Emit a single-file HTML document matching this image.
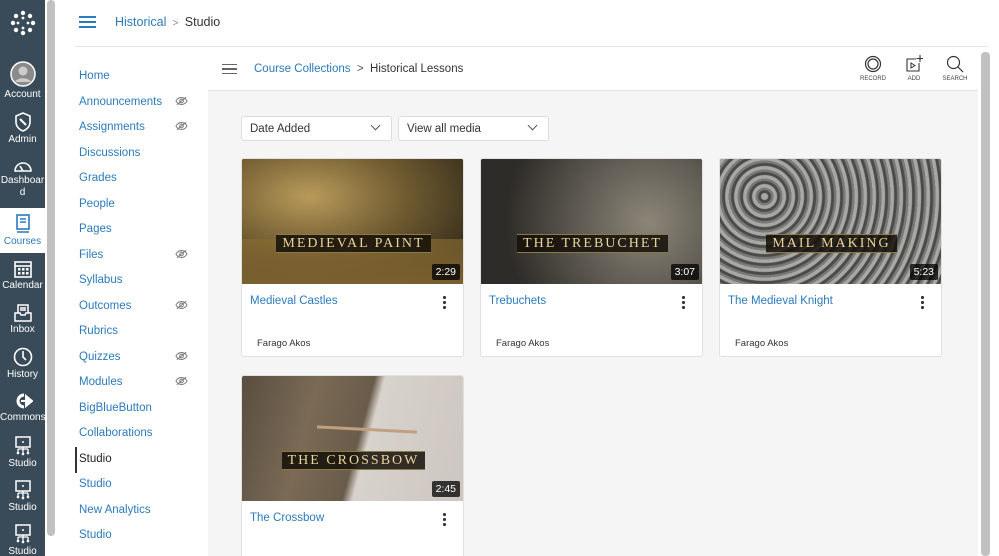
<!DOCTYPE html>
<html style="overflow:hidden;height:556px"><head><meta charset="utf-8"><style>
*{box-sizing:border-box;margin:0;padding:0}
body{width:999px;height:556px;overflow:hidden;background:#fff;font-family:"Liberation Sans",sans-serif;position:relative}
.gn{position:absolute;left:0;top:0;width:45px;height:556px;background:#394b58;color:#fff}
.gi{position:absolute;left:0;width:45px;text-align:center;font-size:10px;line-height:12px}
.gi svg{display:block;margin:0 auto 2px}
.sb{position:absolute;left:45px;top:0;width:13px;height:556px;background:#fff}
.sb div{position:absolute;left:2px;top:0;width:8px;height:536px;background:#c1c1c1;border-radius:4px}
.top{position:absolute;left:75px;top:0;width:913px;height:47px;border-bottom:1px solid #e6e6e6}
.cn{position:absolute;left:58px;top:47px;width:150px;height:509px;background:#fff}
.cn a{position:absolute;left:21px;font-size:11.5px;color:#2b7abc;text-decoration:none}
.eye{position:absolute;left:117px}
.main{position:absolute;left:208px;top:47px;width:770px;height:509px;background:#f5f5f5;overflow:hidden}
.hdr{position:absolute;left:0;top:0;width:770px;height:44px;background:#fff;border-bottom:1px solid #e2e2e2}
.rsb{position:absolute;left:978px;top:47px;width:21px;height:509px;background:#fff}
.rsb div{position:absolute;left:3px;top:5px;width:9px;height:504px;background:#c1c1c1;border-radius:4px}
.sel{position:absolute;top:69px;height:25px;background:#fff;border:1px solid #ddd;border-radius:3px;font-size:11.5px;color:#333;padding:6px 8px}
.sel span{position:absolute;right:12px;top:5px;width:7px;height:7px;border-right:1px solid #555;border-bottom:1px solid #555;transform:rotate(45deg)}
.card{position:absolute;width:223px;height:199px;background:#fff;border:1px solid #e0e0e0;border-radius:3px;overflow:hidden}
.th{position:absolute;left:0;top:0;width:223px;height:125px}
.lab{position:absolute;left:0;right:0;top:75px;text-align:center}
.lab span{background:rgba(20,15,8,.85);color:#e8d59a;font-family:"Liberation Serif",serif;font-size:14px;letter-spacing:2px;padding:1px 6px;border-top:1px solid #8a7a4a;border-bottom:1px solid #8a7a4a}
.dur{position:absolute;right:5px;bottom:4px;background:rgba(0,0,0,.75);color:#fff;font-size:10.5px;padding:2px 4px;border-radius:2px}
.tt{position:absolute;left:8px;top:136px;font-size:11.5px;color:#2b7abc}
.dots{position:absolute;left:201px;top:137px;width:3px;font-size:0}
.dots i{display:block;width:2.5px;height:2.5px;background:#333;border-radius:50%;margin-bottom:2.5px}
.au{position:absolute;left:15px;top:179px;font-size:9.5px;color:#333}
</style></head><body>
<svg width="0" height="0" style="position:absolute"><defs><symbol id="eye" viewBox="0 0 14 10"><path d="M1 5c3-5 9-5 12 0-3 5-9 5-12 0z" fill="none" stroke="#777" stroke-width="1"/><circle cx="7" cy="5" r="2" fill="none" stroke="#777"/><path d="M2 9L12 1" stroke="#777"/></symbol></defs></svg>
<div class="gn">
<div class="gi" style="top:10px"><svg width="26" height="26" viewBox="0 0 26 26"><g fill="#fff"><circle cx="13" cy="3" r="2.2"/><circle cx="13" cy="23" r="2.2"/><circle cx="3" cy="13" r="2.2"/><circle cx="23" cy="13" r="2.2"/><circle cx="6" cy="6" r="2.2"/><circle cx="20" cy="6" r="2.2"/><circle cx="6" cy="20" r="2.2"/><circle cx="20" cy="20" r="2.2"/><circle cx="13" cy="8" r="1.4"/><circle cx="13" cy="18" r="1.4"/><circle cx="8" cy="13" r="1.4"/><circle cx="18" cy="13" r="1.4"/></g></svg></div>
<div class="gi" style="top:61px"><svg width="26" height="26" viewBox="0 0 26 26"><circle cx="13" cy="13" r="12" fill="#8a8a8a" stroke="#fff" stroke-width="1.5"/><circle cx="13" cy="10" r="4.5" fill="#ccc"/><path d="M5 21c2-5 14-5 16 0" fill="#ccc"/></svg>Account</div>
<div class="gi" style="top:112px"><svg width="18" height="20" viewBox="0 0 18 20"><path d="M9 1l7 3v6c0 5-4 8-7 9-3-1-7-4-7-9V4z" fill="none" stroke="#fff" stroke-width="1.6"/><path d="M6 7l6 6" stroke="#fff" stroke-width="2"/></svg>Admin</div>
<div class="gi" style="top:159px"><svg width="20" height="14" viewBox="0 0 20 14"><path d="M2 12a8 8 0 0116 0z" fill="none" stroke="#fff" stroke-width="1.6"/><path d="M10 12l-3-5" stroke="#fff" stroke-width="1.6"/></svg>Dashboar<br>d</div>
<div style="position:absolute;left:0;top:208px;width:45px;height:45px;background:#fff"></div>
<div class="gi" style="top:214px;color:#2b7abc"><svg width="16" height="20" viewBox="0 0 16 20"><rect x="2" y="1" width="12" height="14" fill="none" stroke="#2b7abc" stroke-width="1.6"/><path d="M5 5h6M5 8h6M2 18h12" stroke="#2b7abc" stroke-width="1.6"/></svg>Courses</div>
<div class="gi" style="top:260px"><svg width="18" height="18" viewBox="0 0 18 18"><rect x="1" y="2" width="16" height="15" fill="none" stroke="#fff" stroke-width="1.6"/><path d="M1 6h16" stroke="#fff" stroke-width="1.6"/><g fill="#fff"><rect x="4" y="8" width="2.5" height="2.5"/><rect x="8" y="8" width="2.5" height="2.5"/><rect x="12" y="8" width="2.5" height="2.5"/><rect x="4" y="12" width="2.5" height="2.5"/><rect x="8" y="12" width="2.5" height="2.5"/><rect x="12" y="12" width="2.5" height="2.5"/></g></svg>Calendar</div>
<div class="gi" style="top:304px"><svg width="18" height="18" viewBox="0 0 18 18"><path d="M4 9V1h10v8M1 9h5l1 2h4l1-2h5v8H1z M6 4h6M6 6h6" fill="none" stroke="#fff" stroke-width="1.5"/></svg>Inbox</div>
<div class="gi" style="top:347px"><svg width="20" height="20" viewBox="0 0 20 20"><circle cx="10" cy="10" r="8.5" fill="none" stroke="#fff" stroke-width="1.6"/><path d="M10 4v6l3 3" fill="none" stroke="#fff" stroke-width="1.6"/></svg>History</div>
<div class="gi" style="top:392px"><svg width="20" height="18" viewBox="0 0 20 18"><path d="M11 3a6 6 0 100 12" fill="none" stroke="#fff" stroke-width="3"/><path d="M8 9h7M13 4l6 5-6 5z" fill="#fff" stroke="#fff" stroke-width="2"/></svg>Commons</div>
<div class="gi" style="top:436px"><svg width="18" height="20" viewBox="0 0 18 20"><rect x="2" y="1" width="14" height="10" fill="none" stroke="#fff" stroke-width="1.5"/><circle cx="9" cy="6" r="1" fill="#fff"/><path d="M9 11v4M4 13h10M4 13v3M14 13v3M9 15v2" stroke="#fff" stroke-width="1.3"/><circle cx="4" cy="17" r="1.3" fill="#fff"/><circle cx="9" cy="18" r="1.3" fill="#fff"/><circle cx="14" cy="17" r="1.3" fill="#fff"/></svg>Studio</div>
<div class="gi" style="top:480px"><svg width="18" height="20" viewBox="0 0 18 20"><rect x="2" y="1" width="14" height="10" fill="none" stroke="#fff" stroke-width="1.5"/><circle cx="9" cy="6" r="1" fill="#fff"/><path d="M9 11v4M4 13h10M4 13v3M14 13v3M9 15v2" stroke="#fff" stroke-width="1.3"/><circle cx="4" cy="17" r="1.3" fill="#fff"/><circle cx="9" cy="18" r="1.3" fill="#fff"/><circle cx="14" cy="17" r="1.3" fill="#fff"/></svg>Studio</div>
<div class="gi" style="top:524px"><svg width="18" height="20" viewBox="0 0 18 20"><rect x="2" y="1" width="14" height="10" fill="none" stroke="#fff" stroke-width="1.5"/><circle cx="9" cy="6" r="1" fill="#fff"/><path d="M9 11v4M4 13h10M4 13v3M14 13v3M9 15v2" stroke="#fff" stroke-width="1.3"/><circle cx="4" cy="17" r="1.3" fill="#fff"/><circle cx="9" cy="18" r="1.3" fill="#fff"/><circle cx="14" cy="17" r="1.3" fill="#fff"/></svg>Studio</div>
</div>
<div class="sb"><div></div></div>
<div class="top">
<div style="position:absolute;left:4px;top:16px;width:17px;height:12px;border-top:2px solid #2b7abc;border-bottom:2px solid #2b7abc"><div style="margin-top:3px;height:2px;background:#2b7abc"></div></div>
<div style="position:absolute;left:40px;top:15px;font-size:12.5px;color:#2b7abc">Historical <span style="color:#888;font-size:10px">&nbsp;&gt;&nbsp;</span> <span style="color:#333">Studio</span></div>
</div>
<div class="cn">
<a style="top:23px">Home</a>
<a style="top:49px">Announcements</a><svg class="eye" style="top:49px" width="13" height="10"><use href="#eye"/></svg>
<a style="top:74px">Assignments</a><svg class="eye" style="top:74px" width="13" height="10"><use href="#eye"/></svg>
<a style="top:100px">Discussions</a>
<a style="top:125px">Grades</a>
<a style="top:151px">People</a>
<a style="top:176px">Pages</a>
<a style="top:202px">Files</a><svg class="eye" style="top:202px" width="13" height="10"><use href="#eye"/></svg>
<a style="top:227px">Syllabus</a>
<a style="top:253px">Outcomes</a><svg class="eye" style="top:253px" width="13" height="10"><use href="#eye"/></svg>
<a style="top:278px">Rubrics</a>
<a style="top:304px">Quizzes</a><svg class="eye" style="top:304px" width="13" height="10"><use href="#eye"/></svg>
<a style="top:329px">Modules</a><svg class="eye" style="top:329px" width="13" height="10"><use href="#eye"/></svg>
<a style="top:355px">BigBlueButton</a>
<a style="top:380px">Collaborations</a>
<div style="position:absolute;left:17px;top:400px;width:1.5px;height:26px;background:#333"></div>
<a style="top:406px;color:#222">Studio</a>
<a style="top:431px">Studio</a>
<a style="top:457px">New Analytics</a>
<a style="top:482px">Studio</a>
</div>
<div class="main">
<div class="hdr">
<div style="position:absolute;left:14px;top:17px;width:15px;height:10px;border-top:1.5px solid #666;border-bottom:1.5px solid #666"><div style="margin-top:3px;height:1.5px;background:#666"></div></div>
<div style="position:absolute;left:46px;top:16px;font-size:11.5px;color:#2b7abc">Course Collections <span style="color:#555">&nbsp;&gt;&nbsp;</span> <span style="color:#333">Historical Lessons</span></div>
<div style="position:absolute;left:650px;top:8px;width:30px;text-align:center;font-size:6px;color:#444"><svg width="18" height="18" viewBox="0 0 18 18" style="display:block;margin:0 auto 3px"><circle cx="9" cy="9" r="7.5" fill="none" stroke="#333" stroke-width="1.2"/><circle cx="9" cy="9" r="5" fill="none" stroke="#333" stroke-width="1.2"/></svg>RECORD</div>
<div style="position:absolute;left:692px;top:8px;width:28px;text-align:center;font-size:6px;color:#444"><svg width="18" height="18" viewBox="0 0 18 18" style="display:block;margin:0 auto 3px"><path d="M11 4H2v12h12V8" fill="none" stroke="#333" stroke-width="1.1"/><path d="M6 8v5l4-2.5z" fill="none" stroke="#333"/><path d="M15 0v7M11.5 3.5h7" stroke="#333" stroke-width="1.1"/></svg>ADD</div>
<div style="position:absolute;left:733px;top:8px;width:28px;text-align:center;font-size:6px;color:#444"><svg width="18" height="18" viewBox="0 0 18 18" style="display:block;margin:0 auto 3px"><circle cx="7.5" cy="7.5" r="6" fill="none" stroke="#333" stroke-width="1.2"/><path d="M12 12l5 5" stroke="#333" stroke-width="1.2"/></svg>SEARCH</div>
</div>
<div class="sel" style="left:33px;width:151px">Date Added<span></span></div>
<div class="sel" style="left:190px;width:151px">View all media<span></span></div>
<div class="card" style="left:33px;top:111px"><div class="th" style="background:radial-gradient(ellipse at 30% 30%,#b89a5a,#6e5a30 45%,#2a2416 90%),#3a3020"><div style="position:absolute;left:0;right:0;bottom:0;height:45px;background:linear-gradient(180deg,rgba(140,110,50,.6),#7a6030)"></div><div class="lab"><span>MEDIEVAL PAINT</span></div><div class="dur">2:29</div></div><div class="tt">Medieval Castles</div><div class="dots"><i></i><i></i><i></i></div><div class="au">Farago Akos</div></div>
<div class="card" style="left:272px;top:111px"><div class="th" style="background:radial-gradient(circle at 75% 50%,#8c8678,#5e5a52 40%,#2e2c28 80%),#3c3a36"><div class="lab"><span>THE TREBUCHET</span></div><div class="dur">3:07</div></div><div class="tt">Trebuchets</div><div class="dots"><i></i><i></i><i></i></div><div class="au">Farago Akos</div></div>
<div class="card" style="left:511px;top:111px"><div class="th" style="background:repeating-radial-gradient(circle at 20% 30%,#a8a8a4 0 3px,#4a4a48 4px 6px,#7a7a76 7px 9px),#666"><div class="lab"><span>MAIL MAKING</span></div><div class="dur">5:23</div></div><div class="tt">The Medieval Knight</div><div class="dots"><i></i><i></i><i></i></div><div class="au">Farago Akos</div></div>
<div class="card" style="left:33px;top:328px"><div class="th" style="background:linear-gradient(105deg,#5a4e40 0,#7a6a56 30%,#6a5c4a 52%,#d8d2cc 56%,#cdc6c0 100%)"><div style="position:absolute;left:75px;top:52px;width:100px;height:3px;background:#c0a080;transform:rotate(3deg)"></div><div class="lab"><span>THE CROSSBOW</span></div><div class="dur">2:45</div></div><div class="tt">The Crossbow</div><div class="dots"><i></i><i></i><i></i></div></div>
</div>
<div class="rsb"><div></div></div>
</body></html>
